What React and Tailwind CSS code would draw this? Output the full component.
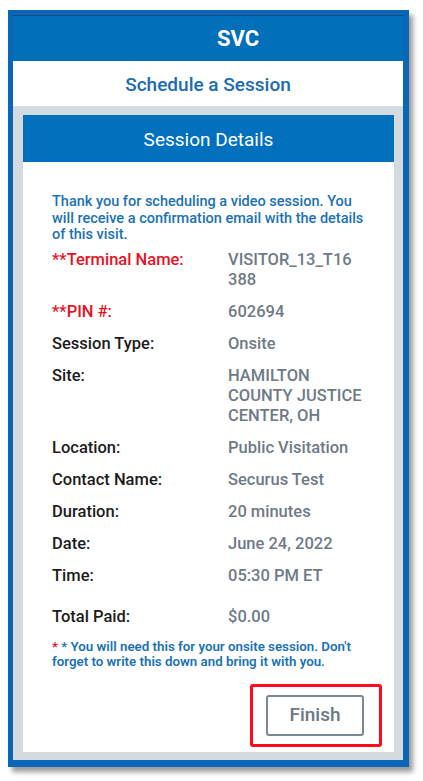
import React from 'react';

const rows = [
  { label: '**Terminal Name:', value: 'VISITOR_13_T16\u200B388', alert: true },
  { label: '**PIN #:', value: '602694', alert: true },
  { label: 'Session Type:', value: 'Onsite' },
  { label: 'Site:', value: 'HAMILTON COUNTY JUSTICE CENTER, OH' },
  { label: 'Location:', value: 'Public Visitation' },
  { label: 'Contact Name:', value: 'Securus Test' },
  { label: 'Duration:', value: '20 minutes' },
  { label: 'Date:', value: 'June 24, 2022' },
  { label: 'Time:', value: '05:30 PM ET' }
];

function DetailRow({ label, value, alert }) {
  return (
    <div className="flex text-[16.5px] leading-[20px] font-medium">
      <div className={`w-[176px] shrink-0 ${alert ? 'text-[#e8111f]' : 'text-[#1c1c1c]'}`}>{label}</div>
      <div className="w-[138px] text-[#6f7a86] [overflow-wrap:anywhere]">{value}</div>
    </div>
  );
}

export default function App() {
  return (
    <div className="min-h-[781px] bg-white pt-[10px] pl-[8px]" style={{ fontFamily: 'Roboto, "Noto Sans", sans-serif' }}>
      <div className="w-[401px] h-[757px] flex flex-col bg-[#d5dadf] border-[#0a66b7] border-t-[5px] border-l-[5px] border-r-[6px] border-b-[7px] shadow-[4px_5px_5px_rgba(0,0,0,0.4)]">
        {/* top bar */}
        <div className="h-[46px] shrink-0 bg-[#0170b8] border-t border-[#1d4a73] flex items-center justify-center pl-[60px]">
          <span className="text-white text-[22px] font-bold">SVC</span>
        </div>
        <div className="h-[45px] shrink-0 bg-white flex items-center justify-center pt-[4px]">
          <span className="text-[#1a6cae] text-[19px] font-medium">Schedule a Session</span>
        </div>

        {/* card */}
        <div className="flex-1 flex flex-col pt-[9px] pl-[10px] pr-[9px] pb-[8px]">
          <div className="flex-1 flex flex-col bg-white">
            <div className="h-[47px] shrink-0 bg-[#0170bd] flex items-center justify-center pt-[3px]">
              <span className="text-white text-[19px]">Session Details</span>
            </div>
            <div className="flex-1 flex flex-col pt-[32px] pl-[29px] pr-[28px]">
              <p className="text-[14.5px] leading-[16.5px] font-medium text-[#1a72b3]">
                Thank you for scheduling a video session. You will receive a confirmation email with the details of this visit.
              </p>
              <div className="mt-[6px] flex flex-col gap-[12px]">
                {rows.map((r, i) => (
                  <DetailRow key={i} {...r} />
                ))}
              </div>
              <div className="mt-[21px]">
                <DetailRow label="Total Paid:" value="$0.00" />
              </div>
              <p className="mt-[12px] text-[13.3px] leading-[15px] font-semibold text-[#1a72b3]">
                <span className="text-[#e8111f]">*</span> * You will need this for your onsite session. Don't forget to write this down and bring it with you.
              </p>
              <div className="mt-[15px] flex justify-end -mr-[16px]">
                <div className="border-[3px] border-[#ff0a1e] rounded-[3px] pt-[8px] pb-[8px] pl-[13px] pr-[15px]">
                  <button className="w-[98px] h-[41px] border-2 border-[#7b8792] rounded-[3px] bg-white text-[#6c7783] text-[19px] font-medium">
                    Finish
                  </button>
                </div>
              </div>
            </div>
          </div>
        </div>
      </div>
    </div>
  );
}
